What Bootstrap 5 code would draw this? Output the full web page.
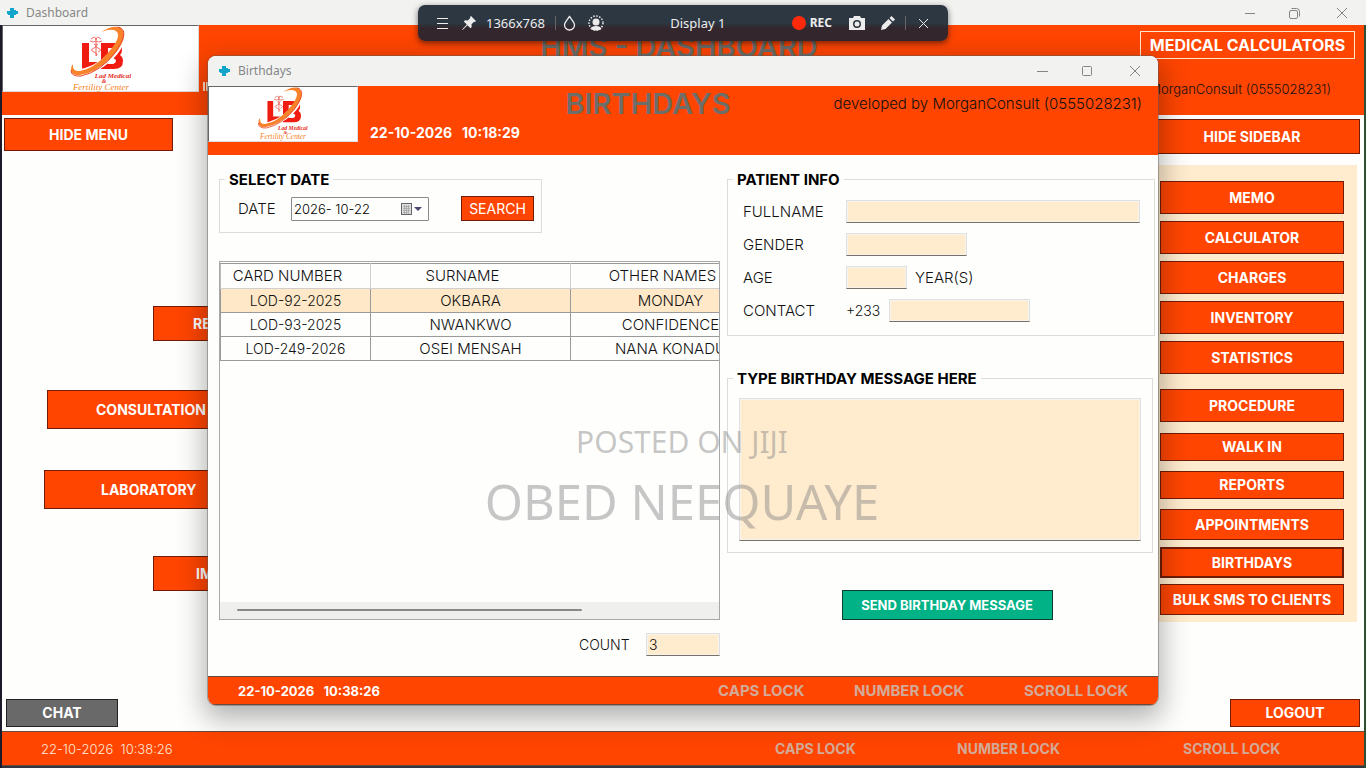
<!DOCTYPE html>
<html lang="en">
<head>
<meta charset="utf-8">
<meta name="viewport" content="width=device-width, initial-scale=1">
<title>Dashboard</title>
<link href="https://cdn.jsdelivr.net/npm/bootstrap@5.3.0/dist/css/bootstrap.min.css" rel="stylesheet">
<style>
  :root { --brand: #ff4500; --cream: #ffebcd; --maroon: #701c08; --chrome: #f2f3f1; }
  body { font-family: Inter, "Noto Sans", sans-serif; font-size: 14px; line-height: 20px; color: #111; background: #fefefd; font-weight: 300; }
  strong, b { font-weight: 700; }
  .desktop { min-height: 100vh; }
  .edge-l { border-left: 2px solid #1c1a2a; }
  .edge-r { border-right: 2px solid #2d5035; }
  .chrome { background: var(--chrome); font-family: "Noto Sans", sans-serif; font-size: 12px; font-weight: 400; color: #868686; }
  .chrome-main { height: 25px; padding: 0 18px 0 6px; }
  .chrome-win { height: 30px; padding: 0 17px 0 10px; }
  .win-ctl { border: 0; background: none; padding: 0; color: #858585; line-height: 0; }
  .brand-bg { background: var(--brand); }
  .head-main { height: 90px; }
  .head-win { height: 69px; }
  .logo-box { background: #fff; border: 1px solid #ddd; border-top-color: #666; border-left-color: #666; }
  .logo-main { width: 197px; height: 67px; }
  .logo-win { width: 150px; height: 56px; }
  .head-title { font-size: 29px; line-height: 36px; font-weight: 600; color: #6d6d6a; }
  .win-title { padding-right: 70px; }
  .dev { font-size: 13px; }
  .dev-win { font-size: 15px; }
  .cmd { background: var(--brand); color: #fff; border: 1px solid var(--maroon); border-radius: 0; font-weight: 700; font-size: 14px; line-height: 20px; padding: 0; height: 33px; }
  .cmd:hover { background: #e83f00; color: #fff; }
  .cmd-tall { height: 39px; }
  .cmd-mid { height: 35px; }
  .cmd-low { height: 28px; }
  .cmd-std { height: 31px; }
  .cmd-on { border-width: 2px; }
  .cmd-plain { border-color: #ffe6d0; font-size: 16px; width: 215px; }
  .side-l { width: 240px; padding: 3px 0 0 2px; }
  .side-r { width: 216px; }
  .menu-btn { text-align: left; padding-left: 48px; }
  .side-panel { background: var(--cream); padding: 16px 13px 7px 19px; margin: 11px 3px 0 0; }
  .status { border: 1px solid #6b4a3c; border-width: 1px 0; font-size: 13px; color: #ffe9d8; display: grid; align-items: center; }
  .status-main { height: 35px; padding-left: 39px; grid-template-columns: minmax(0,734fr) minmax(0,182fr) minmax(0,226fr) minmax(0,181fr); }
  .status-win { height: 29px; padding-left: 30px; grid-template-columns: minmax(0,480fr) minmax(0,136fr) minmax(0,170fr) minmax(0,134fr); }
  .lock { font-size: 14px; font-weight: 700; color: #d3aa98; }
  .status-win .lock { font-size: 15px; }
  .win { position: absolute; top: 56px; bottom: 63px; left: 208px; right: 208px; border-radius: 8px; background: #fefefd; overflow: hidden; z-index: 2; box-shadow: 0 0 0 1px rgba(90,90,90,.45), 0 10px 28px 4px rgba(0,0,0,.3); }
  .win-body { display: grid; grid-template-columns: minmax(0,501fr) minmax(0,428fr); column-gap: 7px; padding: 15px 3px 20px 11px; }
  .group { border: 1px solid #dcdcdc; min-width: 0; }
  .group legend { float: none; width: auto; margin: 0 0 0 5px; padding: 2px 4px 0; font-size: 15px; line-height: 16px; font-weight: 700; color: #000; }
  .form-lines { font-size: 15px; row-gap: 10px; padding: 12px 14px 0 15px; }
  .fld { background: var(--cream); border: 1px solid #dfe0e2; border-bottom-color: #77716a; border-radius: 0; padding: 0 2px; height: 23px; font-size: 14px; font-weight: 300; color: #111; box-shadow: inset 0 0 0 1px #f8f4ec; }
  .date-box { width: 138px; height: 24px; border: 1px solid #8a8a8a; border-radius: 1px; }
  .date-box input { border: 0; outline: 0; padding: 0 2px; width: 104px; background: none; font-size: 13px; font-weight: 300; }
  .grid-box { border: 1px solid #a8a8a8; overflow: hidden; padding-top: 1px; }
  .data { width: 551px; table-layout: fixed; border-collapse: collapse; margin: 0; text-align: center; font-size: 15px; line-height: 20px; }
  .data th { font-weight: 300; height: 25px; padding: 0 16px 0 0; border: 1px solid #cfcfcf; border-top-color: #999; border-left-color: #bbb; }
  .data td { height: 24px; padding: 0; border: 1px solid #9a9a9a; white-space: nowrap; }
  .data td:first-child { font-size: 14px; }
  .data .picked td { background: #fee8c8; }
  .hbar { height: 17px; background: #efefee; padding: 7px 137px 0 17px; }
  .hthumb { height: 2px; background: #888; border-radius: 1px; }
  .lbl { width: 103px; }
  .msg { height: 143px; resize: none; }
  .send-row { padding: 37px 0 0 12px; }
  .send { background: #00b286; border-color: #0c3d30; width: 211px; height: 30px; font-size: 13px; }
  .chat { background: #696969; border-color: #222; width: 112px; height: 28px; margin-left: 2px; }
  .logout { width: 130px; height: 28px; }
  .ticks { width: 7px; height: 9px; background: repeating-linear-gradient(90deg,#ffd9c4 0 2px,#ff4500 2px 3px); }
  .rec { position: absolute; top: 5px; left: 50%; transform: translateX(-50%); width: 530px; height: 36px; z-index: 3; border-radius: 7px; padding: 0 19px 0 17px; background: linear-gradient(#2d3742 0 50%, #33262d 65% 100%); box-shadow: 0 2px 6px rgba(0,0,0,.55); color: #ececec; font-family: "Noto Sans", sans-serif; font-size: 13px; font-weight: 400; }
  .rec b { font-size: 12px; }
  .rec button { border: 0; background: none; padding: 0; color: inherit; line-height: 0; }
  .rec-dot { width: 14px; height: 14px; border-radius: 50%; background: #ff2a0c; }
  .rule { width: 1px; height: 14px; background: #68646a; }
  .mark-layer { position: absolute; inset: 0; z-index: 4; pointer-events: none; font-family: "Noto Sans", sans-serif; font-weight: 400; color: rgba(135,135,135,.47); text-align: center; padding: 421px 2px 0 0; }
  .mark-a { font-size: 30px; line-height: 42px; }
  .mark-b { font-size: 49px; line-height: 76px; }
</style>
</head>
<body>
<svg class="d-none" xmlns="http://www.w3.org/2000/svg">
  <symbol id="plus" viewBox="0 0 12 12"><path fill="#12a5cc" d="M4 1h4v2h2v1h2v3h-2v1H8v3H4V8H2V7H1V4h3z"/></symbol>
  <symbol id="lad" viewBox="0 0 62 66">
    <path fill="#f01c12" d="M12 17h7v19h10v7H12z"/>
    <path fill="#f01c12" fill-rule="evenodd" d="M31 17h14q7 0 7 7 0 3-2 5 3 2 3 6 0 8-9 8H31zM38 22v5h5q2-1 2-3t-2-2zM38 32v6h5q3-1 3-3t-3-3z"/>
    <path fill="#fff" d="M20 16h11v14h-3v13h-1V30h-7z" opacity=".9"/>
    <g fill="none" stroke="#ee6b62" stroke-width="1"><path d="M26 12v18M21 13q5-4 5 1 0-5 5-1M20 15q4 2 6 0 2 2 6 0M24 18q5 2 0 4t0 4 2 4M28 18q-5 2 0 4t0 4"/></g>
    <path fill="none" stroke="#fff" stroke-width="7" d="M46 5q10 10-5 25T5 48"/>
    <path fill="#f9822b" d="M31 6Q44-2 51 2q9 9-9 29Q26 47 10 49q-9 1-9-6 0-3 2-5-1 8 7 7 13-2 27-17Q53 10 46 5q-5-3-15 1z"/>
    <path fill="none" stroke="#e4472b" stroke-width="1" d="M48 1q13 3-3 26Q30 46 11 50 1 51 1 44"/>
    <g font-family="Liberation Serif, serif" font-style="italic" text-anchor="middle">
      <text x="43" y="52" font-size="7" font-weight="700" fill="#e62b1b">Lad Medical</text>
      <text x="34" y="57" font-size="6" font-weight="700" fill="#e62b1b">&amp;</text>
      <text x="31" y="64" font-size="9" fill="#f58220">Fertility Center</text>
    </g>
  </symbol>
</svg>

<div class="desktop position-relative d-flex flex-column overflow-hidden">
  <div class="chrome chrome-main d-flex align-items-center">
    <svg width="12" height="12" class="me-1"><use href="#plus"/></svg><span class="ms-1">Dashboard</span>
    <div class="ms-auto d-flex align-items-center">
      <button class="win-ctl me-4" aria-label="Minimize"><svg width="12" height="12"><path d="M1 6.500h10" stroke="currentColor"/></svg></button>
      <button class="win-ctl mx-2" aria-label="Restore"><svg width="12" height="12" fill="none" stroke="currentColor"><rect x="1.500" y="3.500" width="8" height="8" rx="1.500"/><path d="M3.500 1.500h5q3 0 3 3v5"/></svg></button>
      <button class="win-ctl ms-4 ps-1" aria-label="Close"><svg width="12" height="12" stroke="currentColor"><path d="M1 1l10 10M11 1L1 11"/></svg></button>
    </div>
  </div>

  <div class="edge-l edge-r flex-grow-1 d-flex flex-column">
    <header class="brand-bg head-main d-flex position-relative">
      <div class="logo-box logo-main text-center"><svg width="62" height="66"><use href="#lad"/></svg></div>
      <div class="ticks align-self-end mb-4 ms-1"></div>
      <h1 class="head-title position-absolute start-0 end-0 text-center mb-0 mt-1 pe-2">HMS - DASHBOARD</h1>
      <div class="ms-auto d-flex flex-column align-items-end position-relative" style="padding:6px 9px 0 0">
        <button class="btn cmd cmd-low cmd-plain">MEDICAL CALCULATORS</button>
        <span class="dev me-4 mt-3 pt-1">developed by MorganConsult (0555028231)</span>
      </div>
    </header>

    <main class="flex-grow-1 d-flex justify-content-between">
      <nav class="side-l d-flex flex-column">
        <button class="btn cmd" style="width:169px">HIDE MENU</button>
        <div class="d-flex flex-column flex-grow-1" style="padding-top:155px">
          <button class="btn cmd cmd-mid menu-btn" style="margin-left:149px;padding-left:39px">RECORDS</button>
          <button class="btn cmd cmd-tall menu-btn" style="margin:49px 0 0 43px">CONSULTATION</button>
          <button class="btn cmd cmd-tall menu-btn" style="margin:41px 0 0 40px;padding-left:56px">LABORATORY</button>
          <button class="btn cmd cmd-mid menu-btn" style="margin:47px 0 0 149px;padding-left:42px">IMAGING</button>
          <button class="btn cmd chat mt-auto mb-1">CHAT</button>
        </div>
      </nav>
      <aside class="d-flex flex-column align-items-end pt-1 pe-1">
        <button class="btn cmd cmd-mid side-r">HIDE SIDEBAR</button>
        <div class="side-panel side-r d-flex flex-column">
          <div class="d-grid" style="gap:7px">
            <button class="btn cmd">MEMO</button>
            <button class="btn cmd">CALCULATOR</button>
            <button class="btn cmd">CHARGES</button>
            <button class="btn cmd">INVENTORY</button>
            <button class="btn cmd">STATISTICS</button>
          </div>
          <button class="btn cmd" style="margin-top:15px">PROCEDURE</button>
          <div class="d-grid" style="gap:10px;padding:11px 0 7px">
            <button class="btn cmd cmd-low">WALK IN</button>
            <button class="btn cmd cmd-low">REPORTS</button>
            <button class="btn cmd cmd-std">APPOINTMENTS</button>
          </div>
          <div class="d-grid" style="gap:6px">
            <button class="btn cmd cmd-std cmd-on">BIRTHDAYS</button>
            <button class="btn cmd cmd-std">BULK SMS TO CLIENTS</button>
          </div>
        </div>
        <button class="btn cmd logout mt-auto mb-1">LOGOUT</button>
      </aside>
    </main>
    <footer class="brand-bg status status-main">
      <span>22-10-2026 &nbsp;10:38:26</span><span class="lock">CAPS LOCK</span><span class="lock">NUMBER LOCK</span><span class="lock">SCROLL LOCK</span>
    </footer>
    <div style="height:2px;background:#34343f"></div>
  </div>

  <section class="win d-flex flex-column" aria-label="Birthdays">
    <div class="chrome chrome-win d-flex align-items-center">
      <svg width="12" height="12" class="me-1"><use href="#plus"/></svg><span class="ms-1">Birthdays</span>
      <div class="ms-auto d-flex align-items-center">
        <button class="win-ctl me-4" aria-label="Minimize"><svg width="12" height="12"><path d="M0 6.500h11" stroke="currentColor"/></svg></button>
        <button class="win-ctl mx-2" aria-label="Maximize"><svg width="12" height="12" fill="none" stroke="currentColor"><rect x="1.500" y="1.500" width="9" height="9" rx="1"/></svg></button>
        <button class="win-ctl ms-4 ps-1" aria-label="Close"><svg width="12" height="12" stroke="currentColor"><path d="M1 1l10 10M11 1L1 11"/></svg></button>
      </div>
    </div>
    <header class="brand-bg head-win d-flex position-relative">
      <div class="logo-box logo-win text-center"><svg width="52" height="54"><use href="#lad"/></svg></div>
      <strong class="text-white align-self-end ps-2 ms-1 mb-2 pb-1">22-10-2026 &nbsp; 10:18:29</strong>
      <h2 class="head-title win-title position-absolute start-0 end-0 text-center mb-0">BIRTHDAYS</h2>
      <span class="dev-win ms-auto me-3 mt-2 position-relative">developed by MorganConsult (0555028231)</span>
    </header>

    <div class="win-body flex-grow-1">
      <div class="d-flex flex-column">
        <fieldset class="group align-self-start" style="width:323px;height:63px">
          <legend>SELECT DATE</legend>
          <div class="d-flex align-items-center" style="padding:8px 7px 0 18px">
            <label for="day" style="width:53px;font-size:15px">DATE</label>
            <div class="date-box d-flex align-items-center">
              <input id="day" type="text" value="2026- 10-22">
              <svg width="24" height="14" class="ms-1"><rect x="1.500" y="1.500" width="10" height="11" fill="#ddd" stroke="#666"/><path d="M3 4.500h7M3 6.500h7M3 8.500h7M3 10.500h5M4.500 3v9M6.500 3v9M8.500 3v9" stroke="#999" stroke-width=".6"/><path d="M14 5h8l-4 4z" fill="#4a4770"/></svg>
            </div>
            <button class="btn cmd fw-normal ms-auto" style="width:73px;height:25px">SEARCH</button>
          </div>
        </fieldset>
        <div class="grid-box flex-grow-1 d-flex flex-column" style="margin-top:28px">
          <table class="data">
            <thead><tr><th style="width:150px">CARD NUMBER</th><th>SURNAME</th><th>OTHER NAMES</th></tr></thead>
            <tbody>
              <tr class="picked"><td>LOD-92-2025</td><td>OKBARA</td><td>MONDAY</td></tr>
              <tr><td>LOD-93-2025</td><td>NWANKWO</td><td>CONFIDENCE</td></tr>
              <tr><td>LOD-249-2026</td><td>OSEI MENSAH</td><td>NANA KONADU</td></tr>
            </tbody>
          </table>
          <div class="hbar mt-auto"><div class="hthumb"></div></div>
        </div>
        <div class="d-flex justify-content-end align-items-center" style="padding-top:13px">
          <label for="count" style="width:67px">COUNT</label><input id="count" class="fld" style="width:74px" value="3">
        </div>
      </div>

      <div class="d-flex flex-column">
        <fieldset class="group" style="height:166px">
          <legend>PATIENT INFO</legend>
          <div class="form-lines d-flex flex-column">
            <div class="d-flex align-items-center"><label for="full" class="lbl">FULLNAME</label><input id="full" class="fld flex-grow-1"></div>
            <div class="d-flex align-items-center"><label for="gen" class="lbl">GENDER</label><input id="gen" class="fld" style="width:121px"></div>
            <div class="d-flex align-items-center"><label for="age" class="lbl">AGE</label><input id="age" class="fld" style="width:61px"><span class="ms-2">YEAR(S)</span></div>
            <div class="d-flex align-items-center"><label for="tel" class="lbl">CONTACT</label><span style="width:43px;font-size:14px">+233</span><input id="tel" class="fld" style="width:141px"></div>
          </div>
        </fieldset>
        <fieldset class="group" style="margin:33px 2px 0 0;height:184px">
          <legend><label for="msg">TYPE BIRTHDAY MESSAGE HERE</label></legend>
          <div style="padding:11px 11px 0"><textarea id="msg" class="fld msg d-block w-100"></textarea></div>
        </fieldset>
        <div class="send-row text-center"><button class="btn cmd send">SEND BIRTHDAY MESSAGE</button></div>
      </div>
    </div>

    <footer class="brand-bg status status-win">
      <strong class="text-white">22-10-2026 &nbsp; 10:38:26</strong><span class="lock">CAPS LOCK</span><span class="lock">NUMBER LOCK</span><span class="lock">SCROLL LOCK</span>
    </footer>
  </section>

  <div class="rec d-flex align-items-center">
    <button aria-label="Menu"><svg width="14" height="14" stroke="currentColor"><path d="M2 2.500h11M2 7.500h11M2 12.500h11"/></svg></button>
    <button style="margin-left:13px" aria-label="Pin"><svg width="14" height="14" viewBox="0 0 14 14" fill="currentColor"><path d="M9 0l5 5-1 1-1-.3-2.500 2.500.2 2.800-1.200 1.200-3-3L.8 13.700 0 14l.3-.8L4.800 8.500l-3-3L3 4.300l2.800.2L8.300 2 8 1z"/></svg></button>
    <span style="margin-left:10px">1366x768</span>
    <span class="rule" style="margin:0 7px 0 10px"></span>
    <button aria-label="Opacity"><svg width="13" height="16" viewBox="0 0 13 16" fill="none" stroke="currentColor" stroke-width="1.300"><path d="M6.500 1.500C4 5 1.500 7.500 1.500 10a5 5 0 0 0 10 0C11.500 7.500 9 5 6.500 1.500z"/></svg></button>
    <button class="ms-2 ps-1" aria-label="Webcam"><svg width="16" height="16" viewBox="0 0 16 16"><circle cx="8" cy="8" r="7" fill="none" stroke="currentColor" stroke-width="1.500" stroke-dasharray="1.500 1.500"/><circle cx="8" cy="7" r="3.500" fill="currentColor"/><path d="M2.500 14q1-3 5.500-3t5.500 3q-5 3-11 0z" fill="currentColor"/></svg></button>
    <span class="mx-auto">Display 1</span>
    <span class="rec-dot me-1"></span><b>REC</b>
    <button style="margin-left:17px" aria-label="Photo"><svg width="16" height="14" viewBox="0 0 16 14"><path fill="currentColor" fill-rule="evenodd" d="M5 0h6l1 2h4v12H0V2h4zM8 4a4 4 0 1 0 0 8 4 4 0 0 0 0-8z"/><circle cx="8" cy="8" r="2.500" fill="currentColor"/></svg></button>
    <button class="ms-3" aria-label="Draw"><svg width="14" height="14" viewBox="0 0 14 14" fill="currentColor"><path d="M0 14l1-4.500L7.500 3 11 6.500 4.500 13zM8.500 2l2-2L14 3.500l-2 2z"/></svg></button>
    <span class="rule" style="margin:0 12px 0 10px"></span>
    <button aria-label="Close recorder"><svg width="11" height="11" stroke="currentColor"><path d="M1 1l9 9M10 1l-9 9"/></svg></button>
  </div>

  <div class="mark-layer"><div class="mark-a">POSTED ON JIJI</div><div class="mark-b">OBED NEEQUAYE</div></div>
</div>
<script src="https://cdn.jsdelivr.net/npm/bootstrap@5.3.0/dist/js/bootstrap.bundle.min.js"></script>
</body>
</html>
